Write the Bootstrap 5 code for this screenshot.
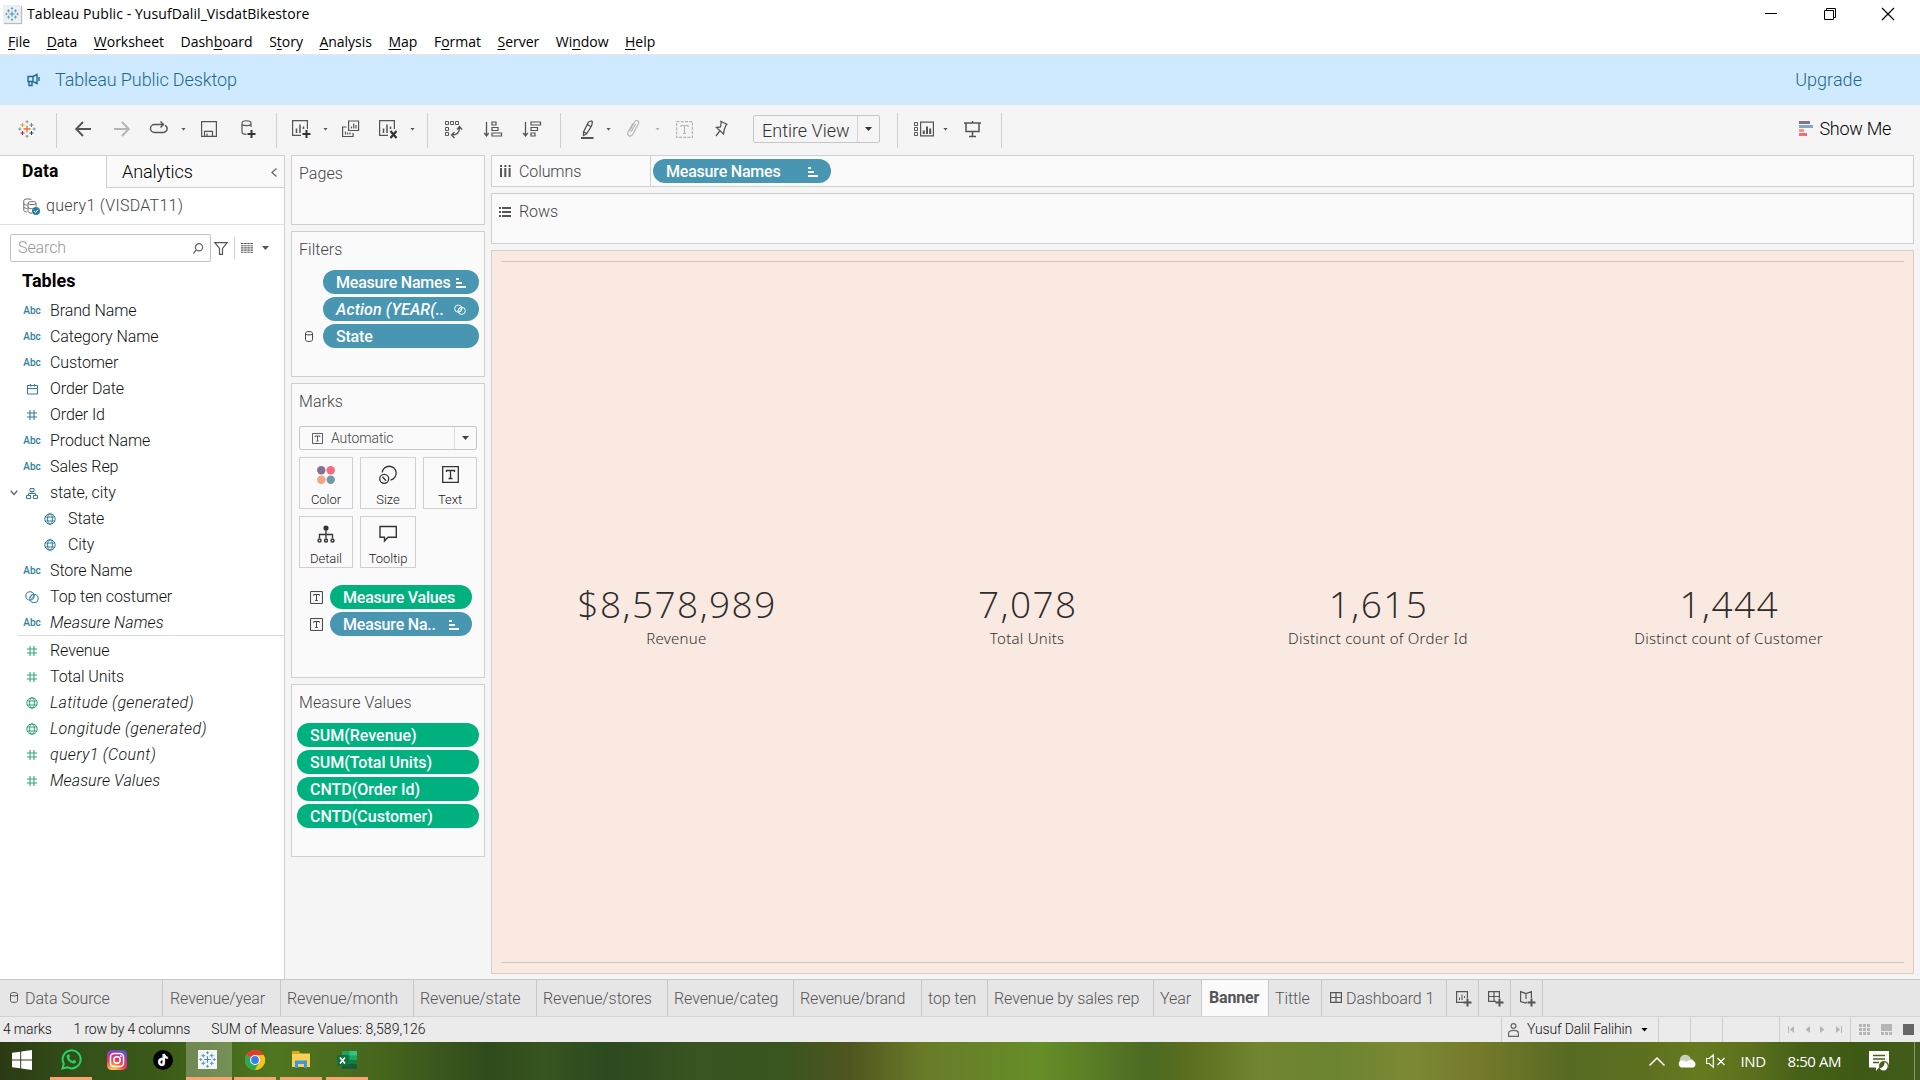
<!DOCTYPE html>
<html lang="en">
<head>
<meta charset="utf-8">
<meta name="viewport" content="width=device-width, initial-scale=1">
<title>Tableau Public - YusufDalil_VisdatBikestore</title>
<link href="https://cdn.jsdelivr.net/npm/bootstrap@5.3.0/dist/css/bootstrap.min.css" rel="stylesheet">
<style>
body{font:300 16px/1.2 Roboto,"Liberation Sans",sans-serif;letter-spacing:-.1px;color:#1a1a1a;background:#f5f5f5;width:1920px;height:1080px;overflow:hidden}
svg{display:block;flex:none;overflow:visible}
.ln{fill:none;stroke:currentColor}
.segoe{font-family:"Open Sans","Noto Sans",sans-serif;font-weight:400;font-size:14px;color:#000}
.title-bar{height:28px;background:#fff;letter-spacing:.08px}
.title-bar .app-ico{width:18px;height:18px;background:#eceff1;box-shadow:1px 1px 1px #bbb;margin:0 6px 0 3px}
.win-btns{gap:46.5px;padding-right:26px}
.menu-bar{height:27px;background:#fff;border-bottom:1px solid #e6e6e6;padding:3px 0 0 8px;gap:16.6px;letter-spacing:-.03px}
.menu-bar u{text-underline-offset:2px}
.promo{height:50px;background:#cfe9ff;color:#1b6a92;font-size:18px}
.tools{height:50px;color:#555;padding-bottom:2px}
.vsep{width:1px;height:35px;background:#cfcfcf;margin-top:2px}
.dim{color:#b5b5b5}
.soft{color:#666}
.caret{width:5px;height:3px;background:currentColor;clip-path:polygon(0 0,100% 0,50% 100%)}
.caret.big{width:7px;height:4px}
.s9{margin-left:9px}.s12{margin-left:12px}.s13{margin-left:13px}.s14{margin-left:14px}.s15{margin-left:15px}.s16{margin-left:16px}.s17{margin-left:17px}.s18{margin-left:18px}.s19{margin-left:19px}.s20{margin-left:20px}.s21{margin-left:21px}.s22{margin-left:22px}.s23{margin-left:23px}.s24{margin-left:24px}.s25{margin-left:25px}
.fit-box{width:127px;height:28px;border:1px solid #c6c6c6;border-radius:2px;font-size:18px;color:#333;letter-spacing:0}
.fit-box .arrow{width:22px;border-left:1px solid #d4d4d4}
.work{height:824px}
.side{width:285px;background:#fff;border-top:1px solid #cfcfcf;border-right:1px solid #cfcfcf}
.side-tabs{height:32px;font-size:18px;color:#000}
.side-tabs .on{width:106px;padding:0 0 2px 22px;font-weight:700;font-size:17.5px;letter-spacing:.1px}
.side-tabs .off{background:#fafafa;border-left:1px solid #cfcfcf;border-bottom:1px solid #cfcfcf;padding:1px 7px 0 15px}
.src{height:37px;border-bottom:1px solid #e0e0e0;padding-left:23px;color:#444;letter-spacing:.27px}
.find{padding:9px 0 0 10px;color:#555}
.find-box{width:201px;height:28px;border:1px solid #c2c2c2;border-radius:2px;padding:0 7px 0 7px;color:#999}
.tree-title{font-weight:700;font-size:18px;color:#000;padding:8px 0 0 22px;height:36px;letter-spacing:.05px}
.f{height:26px;padding-left:24px;color:#111}
.f .ic{width:16px;margin-right:10px;display:flex;justify-content:center;color:#2f7ea0}
.f.g .ic{color:#2fa57c}
.f.sub{padding-left:42px}
.f em{letter-spacing:.12px}
.f em.gen{letter-spacing:.34px}
.f .abc{font:500 10px/1 Roboto,sans-serif;letter-spacing:0}
.rule{margin-left:18px;height:1px;background:#dcdcdc;margin-bottom:2px;margin-top:-1px}
.cards{width:194px;margin-left:6px}
.shelf{background:#fafafa;border:1px solid #cfcfcf;color:#444}
.shelf h6{font-weight:300;font-size:16px;line-height:19px;margin:0;padding:8px 0 0 7px;letter-spacing:.05px}
.pg{height:70px}.fl{height:146px;margin-top:6px}.mk{height:295px;margin-top:6px}.mv{height:173px;margin-top:6px}
.pill{height:24px;border-radius:12px;background:#4996b2;color:#fff;font-weight:500;padding:1px 13px 0 13px;letter-spacing:-.2px;white-space:nowrap}
.pill.gr{background:#00b180}
.mv .pill{letter-spacing:0}
.fl-pills{gap:3px;margin-top:11px;padding:0 5px 0 13px}
.fl-pills>.pill{margin-left:18px}
.mk-pills{gap:3px;margin:17px 12px 0 18px}
.mv-pills{gap:3px;margin:11px 5px 0 5px}
.mk-type{height:24px;margin:15px 7px 0 7px;border:1px solid #c6c6c6;border-radius:2px;font-size:14px}
.mk-type .arrow{width:22px;border-left:1px solid #dcdcdc}
.mk-btns{display:grid;grid-template-columns:54px 56px 54px;column-gap:7px;row-gap:7px;margin:7px 0 0 7px}
.mk-btn{height:52px;border:1px solid #cfcfcf;font-size:13px;color:#222;letter-spacing:-.05px;padding-top:8px}
.mk-btn span{margin-top:8px;line-height:15px}
.dark{color:#333}
.main{width:1423px;margin-left:6px}
.cols{height:32px;color:#444}.cols .lab{width:159px;border-right:1px solid #cfcfcf;padding:1px 0 0 8px}
.rws{height:51px;margin-top:6px;padding:8px 0 0 7px}
.view{height:724px;margin-top:6px;background:#fae9e1;border:1px solid #d6cdc9;padding:10px 9px}
.view-in{border-top:1px solid #d0c8c6;border-bottom:1px solid #d0c8c6;height:702px}
.kpi{color:#333;text-align:center;padding-top:6px}
.kpi .num{font:300 37px/42px "Open Sans","Noto Sans",sans-serif;letter-spacing:1.45px;margin-right:-1.45px;color:#2c2c2c}
.kpi .cap{font:300 15px/20px "Noto Sans","Open Sans",sans-serif;letter-spacing:.26px;margin-top:3px}
.tabs{height:38px;background:#e6e6e6;border-top:1px solid #c9c9c9;border-bottom:1px solid #d2d2d2;color:#555}
.tabs>div{border-right:1px solid #c9c9c9;padding:1px 0 0 6px;white-space:nowrap}
.tabs>div:nth-child(1){width:163px;padding-left:10px}.tabs>div:nth-child(2){width:118px;padding-left:7px}.tabs>div:nth-child(3){width:133px}.tabs>div:nth-child(4){width:123px}.tabs>div:nth-child(5){width:131px}.tabs>div:nth-child(6){width:126px}.tabs>div:nth-child(7){width:128px}.tabs>div:nth-child(8){width:66px}.tabs>div:nth-child(9){width:166px}.tabs>div:nth-child(10){width:48px}.tabs>div:nth-child(11){width:67px;padding:0 0 0 7px;background:#fafafa;font-weight:700;letter-spacing:-.15px}.tabs>div:nth-child(12){width:53px}.tabs>div:nth-child(13){width:125px;padding-left:8px}.tabs>div:nth-child(n+14){width:32px;padding-left:9px}
.stat{height:25px;background:#ebebeb;font-size:14px;letter-spacing:.05px;color:#111}
.stat .tight{letter-spacing:-.17px}
.stat .cell{border-right:1px solid #cfcfcf;height:25px}
.taskbar{height:38px;background:linear-gradient(90deg,#2b3a12 0,#33501a 80px,#3b5a18 160px,#4f7620 275px,#46661d 380px,#2f4b1c 490px,#36551f 545px,#2c4a1e 610px,#3a5422 700px,#3b551f 790px,#50551f 850px,#687a29 920px,#668e28 1040px,#4b6a22 1150px,#5c6e20 1190px,#72852f 1260px,#6b8430 1330px,#7c8933 1410px,#75792b 1480px,#566b22 1570px,#5d6f20 1640px,#667a1f 1700px,#5c701d 1750px,#456118 1800px,#3e5915 1860px,#435c1b 100%)}
.tb{width:46px;height:38px;border-bottom:3px solid transparent}
.tb.run{border-image:linear-gradient(90deg,transparent 5px,#f5a56d 5px,#f5a56d 41px,transparent 41px) 3}
.tb.act{border-color:#f5a56d;background:rgba(255,255,255,.25)}
.tray{color:#fff;font-size:15px;font-family:"Open Sans",sans-serif;font-weight:400;letter-spacing:-.45px}
.tray .edge{width:1px;height:38px;background:#8a9a70;margin:0 5px 0 25px}
</style>
</head>
<body class="d-flex flex-column">
<svg width="0" height="0" class="position-absolute" aria-hidden="true">
 <symbol id="i-num" viewBox="0 0 12 12"><path class="ln" stroke-width="1.1" d="M4 1v10M8 1v10M1 4h10M1 8h10"/></symbol>
 <symbol id="i-globe" viewBox="0 0 12 12"><g class="ln"><circle cx="6" cy="6" r="5.2"/><ellipse cx="6" cy="6" rx="2.4" ry="5.2"/><path d="M1.3 4h9.4M1.3 8h9.4"/></g></symbol>
 <symbol id="i-set" viewBox="0 0 14 12"><g class="ln" stroke-width="1.1"><circle cx="5" cy="5" r="4.2"/><circle cx="9" cy="7.5" r="4.2"/><path d="M6 9l3-5M5 7l2-3" stroke-width=".8"/></g></symbol>
 <symbol id="i-sort" viewBox="0 0 10 10"><path fill="currentColor" d="M0 0h3v2H0zM0 4h6v2H0zM0 8h10v2H0z"/></symbol>
 <symbol id="i-text" viewBox="0 0 14 14"><path class="ln" d="M.6.6h12.8v12.8H.6zM4 5.2V3.8h6v1.4M7 3.8v6.4M5.6 10.2h2.8"/></symbol>
 <symbol id="i-db" viewBox="0 0 8 11"><path class="ln" d="M.5 2.2C.5 0 7.500 0 7.500 2.200v6.600C7.500 11 .5 11 .5 8.800zM.5 3.200C2 4.200 6 4.200 7.500 3.200"/></symbol>
 <symbol id="i-tab" viewBox="0 0 18 18"><path fill="none" stroke-width="1.300" stroke="var(--c,#4a90b8)" d="M9 5.500v7M5.500 9h7"/><g fill="none" stroke-width="1"><path stroke="var(--d,#4a90b8)" d="M4.500 3v4M2.500 5h4"/><path stroke="var(--e,#4a90b8)" d="M13.500 3v4M11.500 5h4"/><path stroke="var(--f,#4a90b8)" d="M4.500 11v4M2.500 13h4"/><path stroke="var(--g,#4a90b8)" d="M13.500 11v4M11.500 13h4"/><path stroke="var(--h,#4a90b8)" d="M9 .3v3M7.500 1.800h3M9 14.700v3M7.500 16.200h3M1.800 7.500v3M.3 9h3M16.200 7.500v3M14.700 9h3"/></g></symbol>
</svg>

<div class="title-bar segoe d-flex align-items-center">
 <div class="app-ico d-flex align-items-center justify-content-center"><svg width="14" height="14"><use href="#i-tab"/></svg></div>
 <span>Tableau Public - YusufDalil_VisdatBikestore</span>
 <div class="win-btns d-flex align-items-center ms-auto">
  <svg width="12" height="12"><path class="ln" d="M0 5.500h12"/></svg>
  <svg width="12" height="12"><path class="ln" d="M.5 2.500h9v9h-9zM2.500 2.500v-2h9v9h-2"/></svg>
  <svg width="12" height="12"><path class="ln" stroke-width="1.200" d="M0 0l12 12M12 0L0 12"/></svg>
 </div>
</div>
<div class="menu-bar segoe d-flex align-items-center">
 <span><u>F</u>ile</span><span><u>D</u>ata</span><span><u>W</u>orksheet</span><span>Dash<u>b</u>oard</span><span>S<u>t</u>ory</span><span><u>A</u>nalysis</span><span><u>M</u>ap</span><span>F<u>o</u>rmat</span><span><u>S</u>erver</span><span>Wi<u>n</u>dow</span><span><u>H</u>elp</span>
</div>
<div class="promo d-flex align-items-center">
 <svg class="s25" width="16" height="14"><path class="ln" stroke-width="1.400" d="M3 3.500h5l4-2v9l-4-2H3zM4 8.500v4h3v-4M8 3.500v5M14 4v4" /></svg>
 <span class="s14">Tableau Public Desktop</span>
 <span class="ms-auto" style="padding-right:58px;letter-spacing:.05px">Upgrade</span>
</div>

<div class="tools d-flex align-items-center">
 <svg class="s18" width="18" height="18" style="--c:#e8762c;--d:#eb912c;--e:#5b879b;--f:#c72035;--g:#1f447e;--h:#7199a6"><use href="#i-tab"/></svg>
 <i class="vsep s20"></i>
 <svg class="s18" width="16" height="16"><path class="ln" stroke-width="1.900" d="M16 8H1.500M8 1L1.200 8 8 15"/></svg>
 <svg class="s23 dim" width="16" height="16"><path class="ln" stroke-width="1.900" d="M0 8h14.500M8 1l6.800 7L8 15"/></svg>
 <svg class="s20" width="18" height="14"><path class="ln" stroke-width="1.400" d="M6 2.500H4.500a3.800 3.800 0 000 8h9a3.800 3.800 0 001.500-7.200M6 2.500h7M10.500-.5l3 3-3 3"/></svg>
 <i class="caret s13"></i>
 <svg class="s15" width="16" height="16"><path class="ln" stroke-width="1.200" d="M.6.6h14.800v14.800H.6zM3.500 15.400v-5h8v5M6 15v-2.500"/></svg>
 <svg class="s24" width="15" height="18"><path class="ln" stroke-width="1.200" d="M1 3c0-3 9-3 9 0v4M1 3v9c0 1.500 2 2.300 4.500 2.300M1 4.500c2 1.500 7 1.500 9 0"/><path class="ln dark" stroke-width="2" d="M10.500 10v8M6.500 14h8"/></svg>
 <i class="vsep s20"></i>
 <svg class="s15" width="18" height="18"><path class="ln" stroke-width="1.200" d="M9 15.400H.6V.6h14.800V9"/><path class="ln" stroke-width="1.500" d="M4.500 13V8.500M8 13V4.500M11.500 9V6.500"/><path class="ln dark" stroke-width="2" d="M14.500 10v8M10.500 14h8"/></svg>
 <i class="caret s13"></i>
 <svg class="s14" width="17" height="18"><path class="ln" stroke-width="1.200" d="M6.600 1h10v9.500h-10zM4.500 7H.6v9.500h10.500v-3.500"/><path class="ln" stroke-width="1.200" d="M9.500 8.500V6.500M11.700 8.500V3.500M14 8.500V5M3.500 14.500v-3M5.700 14.500v-2M8 14.500v-2"/></svg>
 <svg class="s20" width="18" height="18"><path class="ln" stroke-width="1.200" d="M9 15.400H.6V.6h14.800V9"/><path class="ln" stroke-width="1.500" d="M4.500 13V8.500M8 13V4.500M11.500 9V6.500"/><path class="ln dark" stroke-width="2.200" d="M11.500 11l6 7M17.500 11l-6 7"/></svg>
 <i class="caret s13"></i>
 <i class="vsep s12"></i>
 <svg class="s17" width="17" height="18"><path class="ln" d="M.5 1.500h3v3h-3zM5.500 1.500h3v3h-3zM10.500 1.500h3v3h-3zM.5 7.500h3v3h-3zM.5 12.500h3v3h-3z"/><path class="ln" stroke-width="1.400" d="M6.500 15c5 0 8-2 8-7M9.500 12l-3 3 3 3M12 9.500l2.500-3 2.500 3"/></svg>
 <svg class="s22" width="18" height="18"><path class="ln" stroke-width="1.300" d="M2.500 2v14M.3 13l2.200 3 2.200-3"/><path class="ln" stroke-width="1.200" d="M8 2h4v3H8zM8 7.500h6v3H8zM8 13h9.500v3H8z"/></svg>
 <svg class="s21" width="18" height="18"><path class="ln" stroke-width="1.300" d="M2.500 2v14M.3 13l2.200 3 2.200-3"/><path class="ln" stroke-width="1.200" d="M8 2h9.500v3H8zM8 7.500h6.500v3H8zM8 13h4v3H8z"/></svg>
 <i class="vsep s19"></i>
 <svg class="s20" width="13" height="19"><path class="ln" stroke-width="1.300" d="M7.500 2l3-1 1 1-1 4-5 8-3 1.500 0-3.500zM6.500 4.500l3 2M2.500 11.500l3 2"/><path class="ln" stroke-width="2" d="M0 18h12.500"/></svg>
 <i class="caret s12"></i>
 <svg class="s16 dim" width="12" height="18"><path class="ln" stroke-width="1.200" d="M2.500 11l5-9c2-3 5-1 4 1.500L6 14c-2 3.500-6.500 2-5-2l5-8.500M4 12l4.500-8"/></svg>
 <i class="caret dim s16"></i>
 <svg class="s16 dim" width="17" height="17"><path class="ln" stroke-width="1.200" stroke-dasharray="3 1.200" d="M.6.600h15.800v15.800H.6z"/><path class="ln" stroke-width="1.200" d="M5 6V4.500h7V6M8.500 4.500v8M7 12.500h3"/></svg>
 <svg class="s22" width="13" height="18"><path class="ln" stroke-width="1.300" d="M5 1l7.500 3.500M6.300 2L5.500 7 1.500 7.500l7 6.500.8-4.500L11.500 4M5 10.700L1 16"/></svg>
 <div class="fit-box s25 d-flex"><span class="flex-fill align-self-center ps-2 pt-1">Entire View</span><span class="arrow d-flex align-items-center justify-content-center"><i class="caret big"></i></span></div>
 <i class="vsep s17"></i>
 <svg class="s16" width="20" height="16"><path class="ln" d="M.5 1.500h3v3h-3zM.5 6.500h3v3h-3zM.5 11.500h3v3h-3z"/><path class="ln" stroke-width="1.200" d="M6.600 1.200h12.800v13.600H6.600z"/><path class="ln" stroke-width="2" d="M9.800 13V9.500M13 13V5.500M16.200 13V7.500"/></svg>
 <i class="caret s9"></i>
 <svg class="s16" width="17" height="18"><path class="ln" stroke-width="1.500" d="M0 3h17M2 3v8.500h13V3M8.500 1v2M8.500 11.500V16M5 16.500h7"/></svg>
 <i class="vsep s20"></i>
 <svg class="ms-auto" width="14" height="16"><path fill="#86708f" d="M0 0h11v3H0z"/><path fill="#83a5cc" d="M0 4h14v3H0z"/><path fill="#f39c6f" d="M0 8h5v3H0z"/><path fill="#f7697c" d="M0 12h8v3H0z"/></svg>
 <span class="text-black ms-1 me-4" style="font-size:18px;letter-spacing:-.28px;padding:0 5px 0 2px">Show Me</span>
</div>

<div class="work d-flex">
 <div class="side">
  <div class="side-tabs d-flex"><div class="on d-flex align-items-center">Data</div><div class="off flex-fill d-flex align-items-center"><span>Analytics</span><svg class="ms-auto soft" width="6" height="9"><path class="ln" stroke-width="1.300" d="M5.500.500l-4.500 4 4.500 4"/></svg></div></div>
  <div class="src d-flex align-items-center">
   <svg width="17" height="17" class="me-1 soft"><path class="ln" d="M.8 2.500C1 .5 8 .5 8.500 2M.8 2.500v10c.5 1 1.500 1.500 3 1.500M.8 5.500C1.500 7 3 7 4 7M.8 9C1.500 10 3 10.500 4 10.500M5 5c0-2 8-2 8 0v3.500M5 5v8.500c1 1.500 2.500 1.700 4 1.700M5 5.500c1 1.500 7 1.500 8 0M5 9.500c1.500 1.300 3 1 4.500 1"/><circle cx="13" cy="13" r="4" fill="#2b7ea1"/><path fill="none" stroke="#fff" d="M11 13l1.500 1.500L15 11.700"/></svg><span style="padding-left:2px">query1 (VISDAT11)</span></div>
  <div class="find d-flex align-items-center">
   <div class="find-box d-flex align-items-center"><span>Search</span><svg class="ms-auto soft" width="10" height="11"><path class="ln" stroke-width="1.200" d="M3.300 7L.3 10.500"/><circle class="ln" stroke-width="1.200" cx="6" cy="4.300" r="3.600"/></svg></div>
   <svg width="14" height="13" style="margin-left:3px"><path class="ln" stroke-width="1.200" d="M.8.600h12.400L8.500 6.500v5.900h-3V6.500z"/></svg>
   <i class="vsep mt-0" style="height:22px;margin-left:6px"></i>
   <svg width="12" height="10" style="margin-left:6px"><path class="ln" stroke-width="1.100" d="M0 .5h12M0 2.700h12M0 4.900h12M0 7.100h12M0 9.300h12" stroke-dasharray="2.500 .65"/></svg>
   <i class="caret big s9"></i>
  </div>
  <div class="tree-title">Tables</div>
  <div class="f d-flex align-items-center"><span class="ic abc">Abc</span>Brand Name</div>
  <div class="f d-flex align-items-center"><span class="ic abc">Abc</span>Category Name</div>
  <div class="f d-flex align-items-center"><span class="ic abc">Abc</span>Customer</div>
  <div class="f d-flex align-items-center"><span class="ic"><svg width="11" height="11"><path class="ln" d="M.5 1.500h10v8.500H.5zM.5 4.500h10M3.500 0v2.500M7.500 0v2.500"/></svg></span>Order Date</div>
  <div class="f d-flex align-items-center"><span class="ic"><svg width="12" height="12"><use href="#i-num"/></svg></span>Order Id</div>
  <div class="f d-flex align-items-center"><span class="ic abc">Abc</span>Product Name</div>
  <div class="f d-flex align-items-center"><span class="ic abc">Abc</span>Sales Rep</div>
  <div class="f d-flex align-items-center ps-0"><svg class="soft" width="8" height="6" style="margin:0 6px 0 10px"><path class="ln" stroke-width="1.300" d="M.7.700L4 4.500 7.300.700"/></svg><span class="ic"><svg width="12" height="11"><path class="ln" d="M4 .5h4v3H4zM6 3.500v2M2.500 7.500v-2h7v2M.5 7.500h4v3h-4zM7.500 7.500h4v3h-4z"/></svg></span>state, city</div>
  <div class="f sub d-flex align-items-center"><span class="ic"><svg width="12" height="12"><use href="#i-globe"/></svg></span>State</div>
  <div class="f sub d-flex align-items-center"><span class="ic"><svg width="12" height="12"><use href="#i-globe"/></svg></span>City</div>
  <div class="f d-flex align-items-center"><span class="ic abc">Abc</span>Store Name</div>
  <div class="f d-flex align-items-center"><span class="ic"><svg width="14" height="12"><use href="#i-set"/></svg></span>Top ten costumer</div>
  <div class="f d-flex align-items-center"><span class="ic abc">Abc</span><em>Measure Names</em></div>
  <div class="rule"></div>
  <div class="f g d-flex align-items-center"><span class="ic"><svg width="12" height="12"><use href="#i-num"/></svg></span>Revenue</div>
  <div class="f g d-flex align-items-center"><span class="ic"><svg width="12" height="12"><use href="#i-num"/></svg></span>Total Units</div>
  <div class="f g d-flex align-items-center"><span class="ic"><svg width="12" height="12"><use href="#i-globe"/></svg></span><em class="gen">Latitude (generated)</em></div>
  <div class="f g d-flex align-items-center"><span class="ic"><svg width="12" height="12"><use href="#i-globe"/></svg></span><em class="gen">Longitude (generated)</em></div>
  <div class="f g d-flex align-items-center"><span class="ic"><svg width="12" height="12"><use href="#i-num"/></svg></span><em class="gen">query1 (Count)</em></div>
  <div class="f g d-flex align-items-center"><span class="ic"><svg width="12" height="12"><use href="#i-num"/></svg></span><em>Measure Values</em></div>
 </div>

 <div class="cards">
  <div class="shelf pg"><h6>Pages</h6></div>
  <div class="shelf fl"><h6>Filters</h6>
   <div class="fl-pills d-flex flex-column">
    <div class="pill d-flex align-items-center"><span>Measure Names</span><svg class="ms-auto" width="10" height="10"><use href="#i-sort"/></svg></div>
    <div class="pill d-flex align-items-center"><em style="letter-spacing:.12px">Action (YEAR(..</em><svg class="ms-auto" width="12" height="11"><use href="#i-set"/></svg></div>
    <div class="d-flex align-items-center"><svg width="8" height="11" style="margin-right:10px"><use href="#i-db"/></svg><div class="pill flex-fill d-flex align-items-center">State</div></div>
   </div>
  </div>
  <div class="shelf mk"><h6>Marks</h6>
   <div class="mk-type d-flex"><span class="d-flex align-items-center flex-fill" style="padding-left:12px"><svg class="dark me-2" width="11" height="11"><use href="#i-text"/></svg>Automatic</span><span class="arrow d-flex align-items-center justify-content-center"><i class="caret big"></i></span></div>
   <div class="mk-btns">
    <div class="mk-btn d-flex flex-column align-items-center"><svg width="18" height="18"><circle cx="4.300" cy="4.300" r="4.200" fill="#86708f"/><circle cx="13.700" cy="4.300" r="4.200" fill="#f7697c"/><circle cx="4.300" cy="13.700" r="4.200" fill="#f3a57c"/><circle cx="13.700" cy="13.700" r="4.200" fill="#6f9aa5"/></svg><span>Color</span></div>
    <div class="mk-btn d-flex flex-column align-items-center"><svg class="dark" width="18" height="18"><path class="ln" stroke-width="1.300" d="M3.200 6.500a7 7 0 118.300 7.600"/><circle class="ln" stroke-width="1.300" cx="5.200" cy="12.800" r="4.500"/><path class="ln" stroke-width="1.300" d="M3.500 10.800l3.500 4"/></svg><span>Size</span></div>
    <div class="mk-btn d-flex flex-column align-items-center"><svg class="dark" width="17" height="18"><path class="ln" stroke-width="1.300" d="M.7.700h15.600v15.600H.7z"/><path class="ln" stroke-width="1.300" d="M4.500 6V4.500h8V6M8.500 4.500v8M6.500 12.500h4"/></svg><span>Text</span></div>
    <div class="mk-btn d-flex flex-column align-items-center"><svg class="dark" width="18" height="18"><circle cx="9" cy="3" r="2.600" fill="currentColor"/><path class="ln" stroke-width="1.300" d="M9 4v9M2.500 13v-3.500h13V13"/><g class="ln" stroke-width="1.400"><circle cx="2.500" cy="15.500" r="1.500"/><circle cx="9" cy="15.500" r="1.500"/><circle cx="15.500" cy="15.500" r="1.500"/></g></svg><span>Detail</span></div>
    <div class="mk-btn d-flex flex-column align-items-center"><svg class="dark" width="18" height="18"><path class="ln" stroke-width="1.400" d="M1 1.500h16.300v10.800H9L5.500 16v-3.700H1z"/></svg><span>Tooltip</span></div>
   </div>
   <div class="mk-pills d-flex flex-column">
    <div class="d-flex align-items-center"><svg class="dark" width="13" height="13" style="margin-right:7px"><use href="#i-text"/></svg><div class="pill gr flex-fill d-flex align-items-center">Measure Values</div></div>
    <div class="d-flex align-items-center"><svg class="dark" width="13" height="13" style="margin-right:7px"><use href="#i-text"/></svg><div class="pill flex-fill d-flex align-items-center"><span>Measure Na..</span><svg class="ms-auto" width="10" height="10"><use href="#i-sort"/></svg></div></div>
   </div>
  </div>
  <div class="shelf mv"><h6>Measure Values</h6>
   <div class="mv-pills d-flex flex-column">
    <div class="pill gr d-flex align-items-center">SUM(Revenue)</div>
    <div class="pill gr d-flex align-items-center">SUM(Total Units)</div>
    <div class="pill gr d-flex align-items-center">CNTD(Order Id)</div>
    <div class="pill gr d-flex align-items-center">CNTD(Customer)</div>
   </div>
  </div>
 </div>

 <div class="main">
  <div class="shelf cols d-flex"><div class="lab d-flex align-items-center"><svg width="11" height="13" class="me-2"><path fill="#555" d="M0 0h2v2H0zM4.300 0h2v2h-2zM8.600 0h2v2h-2zM0 3h2v9H0zM4.300 3h2v9h-2zM8.600 3h2v9h-2z"/></svg>Columns</div><div class="pill align-self-center d-flex align-items-center" style="width:178px;margin-left:2px"><span>Measure Names</span><svg class="ms-auto" width="10" height="10"><use href="#i-sort"/></svg></div></div>
  <div class="shelf rws d-flex"><svg width="12" height="11" class="me-2" style="margin-top:5px"><path fill="#555" d="M0 0h2v2H0zM3 0h9v2H3zM0 4h2v2H0zM3 4h9v2H3zM0 8h2v2H0zM3 8h9v2H3z"/></svg>Rows</div>
  <div class="view">
   <div class="view-in d-flex align-items-center">
    <div class="kpi col-3"><div class="num">$8,578,989</div><div class="cap">Revenue</div></div>
    <div class="kpi col-3"><div class="num">7,078</div><div class="cap">Total Units</div></div>
    <div class="kpi col-3"><div class="num">1,615</div><div class="cap">Distinct count of Order Id</div></div>
    <div class="kpi col-3"><div class="num">1,444</div><div class="cap">Distinct count of Customer</div></div>
   </div>
  </div>
 </div>
</div>

<div class="tabs d-flex">
 <div class="d-flex align-items-center"><svg width="8" height="11" style="margin:-3px 7px 0 0"><use href="#i-db"/></svg>Data Source</div>
 <div class="d-flex align-items-center">Revenue/year</div><div class="d-flex align-items-center">Revenue/month</div><div class="d-flex align-items-center">Revenue/state</div><div class="d-flex align-items-center">Revenue/stores</div><div class="d-flex align-items-center">Revenue/categ</div><div class="d-flex align-items-center">Revenue/brand</div><div class="d-flex align-items-center">top ten</div><div class="d-flex align-items-center">Revenue by sales rep</div><div class="d-flex align-items-center">Year</div><div class="d-flex align-items-center">Banner</div><div class="d-flex align-items-center">Tittle</div>
 <div class="d-flex align-items-center"><svg width="12" height="11" class="me-1" style="margin-top:-3px"><path class="ln" stroke-width="1.200" d="M.6.600h10.800v9.800H.6zM6 .6v9.800M.6 5.500h10.800"/></svg>Dashboard 1</div>
 <div class="d-flex align-items-center"><svg width="16" height="15"><path class="ln" stroke-width="1.200" d="M8 11.400H.6V.6h10.800V7"/><path class="ln" d="M3.500 9V6.500M6 9V3.500M8.500 7V5"/><path class="ln" stroke-width="2" d="M11.500 7.500v8M7.500 11.500h8"/></svg></div>
 <div class="d-flex align-items-center"><svg width="16" height="15"><path class="ln" stroke-width="1.200" d="M8 10.400H.6V.6h10.800V7M6 .6v9.800M.6 5.500h10.800"/><path class="ln" stroke-width="2" d="M11.500 7.500v8M7.500 11.500h8"/></svg></div>
 <div class="d-flex align-items-center"><svg width="16" height="15"><path class="ln" stroke-width="1.200" d="M7 11L5.500 12 .6 10.500V.6L6 2.500 11.400.6V7M6 2.500V8"/><path class="ln" stroke-width="2" d="M11.500 7.500v8M7.500 11.500h8"/></svg></div>
</div>

<div class="stat d-flex align-items-center">
 <span class="tight" style="padding-left:3px">4 marks</span><span class="s22 tight">1 row by 4 columns</span><span class="s21">SUM of Measure Values: 8,589,126</span>
 <div class="ms-auto cell"></div>
 <div class="cell d-flex align-items-center" style="width:157px;padding-left:6px"><svg width="11" height="14" class="soft"><circle class="ln" stroke-width="1.200" cx="5.500" cy="3" r="2.400"/><path class="ln" stroke-width="1.200" d="M.6 13.400V10c0-3.500 9.800-3.500 9.800 0v3.400z"/></svg><span style="margin-left:8px;letter-spacing:-.17px">Yusuf Dalil Falihin</span><i class="caret big text-black s9"></i></div>
 <div class="cell" style="width:32px"></div><div class="cell" style="width:32px"></div><div class="cell" style="width:57px"></div>
 <div class="cell dim d-flex align-items-center" style="width:71px;padding:0 8px;gap:10.500px">
  <svg width="6" height="7"><path fill="currentColor" d="M0 0h1v7H0zM6 0v7L1.800 3.500z"/></svg><svg width="5" height="7"><path fill="currentColor" d="M5 0v7L.5 3.500z"/></svg><svg width="5" height="7"><path fill="currentColor" d="M0 0v7l4.500-3.500z"/></svg><svg width="6" height="7"><path fill="currentColor" d="M5 0h1v7H5zM0 0v7l4.200-3.500z"/></svg></div>
 <div class="dim d-flex align-items-center" style="gap:11px;padding:0 6px 0 8px"><svg width="11" height="11"><path fill="currentColor" d="M0 0h3v3H0zM4 0h3v3H4zM8 0h3v3H8zM0 4h3v3H0zM4 4h3v3H4zM8 4h3v3H8zM0 8h3v3H0zM4 8h3v3H4zM8 8h3v3H8z"/></svg><svg width="11" height="11"><path fill="currentColor" d="M0 0h11v7H0zM0 8h3v3H0zM4 8h3v3H4zM8 8h3v3H8z"/></svg><svg width="11" height="11"><path fill="#666" d="M0 0h11v11H0z"/></svg></div>
</div>

<div class="taskbar d-flex">
 <div class="tb d-flex align-items-center justify-content-center" style="width:48px"><svg width="20" height="20" style="margin-left:-4px"><path fill="#fff" d="M0 2.800L8.200 1.700v7.800H0zM9.200 1.500L20 0v9.500H9.200zM0 10.500h8.200v7.800L0 17.200zM9.200 10.500H20V20L9.200 18.500z"/></svg></div>
 <div class="tb run d-flex align-items-center justify-content-center"><svg width="21" height="21"><path fill="none" stroke="#25d366" stroke-width="2" d="M1.500 19.500l1.300-4.700a9 9 0 113.400 3.400z"/><path fill="#25d366" d="M7 5.500c1-.7 1.500 0 2 1.700.2.700-.8 1.200-.8 1.600.6 1.600 1.800 2.700 3.300 3.200.5 0 1-1.300 1.600-1 1.900.8 2.400 1 1.800 2.200-1.800 3.600-9.600-1.200-9.300-5.700.1-.9.700-1.600 1.400-2z"/></svg></div>
 <div class="tb d-flex align-items-center justify-content-center"><svg width="20" height="20"><defs><radialGradient id="ig" cx=".3" cy="1.050" r="1.100"><stop offset="0" stop-color="#fd5"/><stop offset=".25" stop-color="#ff9c4a"/><stop offset=".5" stop-color="#f0404c"/><stop offset=".75" stop-color="#c13595"/><stop offset="1" stop-color="#5a4fd0"/></radialGradient></defs><rect width="20" height="20" rx="4.500" fill="url(#ig)"/><rect x="3.500" y="3.500" width="13" height="13" rx="3.500" fill="none" stroke="#fff" stroke-width="1.500"/><circle cx="10" cy="10" r="3.200" fill="none" stroke="#fff" stroke-width="1.500"/><circle cx="13.800" cy="6.200" r=".9" fill="#fff"/></svg></div>
 <div class="tb d-flex align-items-center justify-content-center"><svg width="20" height="20"><circle cx="10" cy="10" r="10" fill="#000"/><g fill="none" stroke-width="2"><path stroke="#25f4ee" d="M9.500 8.500c-5-.2-4.500 6.500-1 6 1.500-.2 1.800-1 1.800-2.500V4"/><path stroke="#fe2c55" d="M10.300 9.300c-5-.2-4.500 6.500-1 6 1.500-.2 2-1 2-2.500V5c.5 2 1.700 3 4 3.200"/><path stroke="#fff" d="M9.900 8.900c-5-.2-4.500 6.300-1 6 1.500-.2 2-1 2-2.500V4c.3 2.300 1.500 3.500 3.800 3.700"/></g></svg></div>
 <div class="tb act d-flex align-items-center justify-content-center"><svg width="19" height="19" style="margin-left:-3px"><rect width="19" height="19" fill="#f3f5f6"/><use href="#i-tab" x="1" y="1" width="17" height="17"/></svg></div>
 <div class="tb run d-flex align-items-center justify-content-center"><svg width="20" height="20"><circle cx="10" cy="10" r="10" fill="#fbc116"/><path fill="#e33b2e" d="M10 10L1.300 5A10 10 0 0118.700 5z"/><path fill="#2da94f" d="M1.300 5A10 10 0 0010 20l4.300-7.500L10 10z"/><path fill="#fbc116" d="M10 5h8.700A10 10 0 0110 20l4.300-7.500z"/><circle cx="10" cy="10" r="5" fill="#fff"/><circle cx="10" cy="10" r="3.900" fill="#3a7df0"/></svg></div>
 <div class="tb run d-flex align-items-center justify-content-center"><svg width="18" height="17"><path fill="#e5a50b" d="M0 0h7l1.500 2.500H0z"/><path fill="#fccf55" d="M0 2.500h18V16H0z"/><path fill="#3b98e0" d="M3 17V9.500h12V17h-3v-4H6v4z"/></svg></div>
 <div class="tb run d-flex align-items-center justify-content-center"><svg width="20" height="18"><path fill="#21a366" d="M5 0h15v18H5z"/><path fill="#33c481" d="M12.500 0H20v4.500h-7.500z"/><path fill="#185c37" d="M5 13h15v5H5z"/><path fill="#107c41" d="M5 4.500h7.500V13H5zM12.500 9H20v4h-7.500z"/><rect y="4" width="11" height="11" rx="1" fill="#0f7038"/><path fill="none" stroke="#fff" stroke-width="1.700" d="M3 6.500l5 6M8 6.500l-5 6"/></svg></div>
 <div class="tray ms-auto d-flex align-items-center">
  <svg width="16" height="9"><path class="ln" stroke-width="1.500" d="M.5 8.500L8 1l7.500 7.500"/></svg>
  <svg class="s12" width="20" height="13"><path fill="#c9cfc0" d="M3 7a5.500 5.500 0 0110.500-3.500L17 5.500 5 9z"/><path fill="#fff" d="M4 12.500A3.800 3.800 0 014 5.500c2-.5 3.500.5 5 1.500 2-1.500 5-3 7-1.200a3.600 3.600 0 01.5 6.700z"/></svg>
  <svg class="s9" width="20" height="14"><path class="ln" stroke-width="1.200" d="M.6 4.500h2.700L7.300.8v12.400L3.300 9.500H.6zM11.500 4l7 7M18.500 4l-7 7"/></svg>
  <span class="s15">IND</span><span class="s22">8:50 AM</span>
  <svg width="20" height="20" style="margin-left:28px"><path fill="#fff" d="M0 0h20v16.500H10L7 20v-3.500H0z"/><path stroke="#46611a" stroke-width="1.300" d="M4 4.500h12M4 8h12M4 11.500h6"/><circle cx="15" cy="15" r="5" fill="#46611a"/><path fill="#fff" d="M15.500 11a4.300 4.300 0 11-5 6c3 .3 5.500-2.500 5-6z"/></svg>
  <i class="edge"></i>
 </div>
</div>
<script src="https://cdn.jsdelivr.net/npm/bootstrap@5.3.0/dist/js/bootstrap.bundle.min.js"></script>
</body>
</html>
